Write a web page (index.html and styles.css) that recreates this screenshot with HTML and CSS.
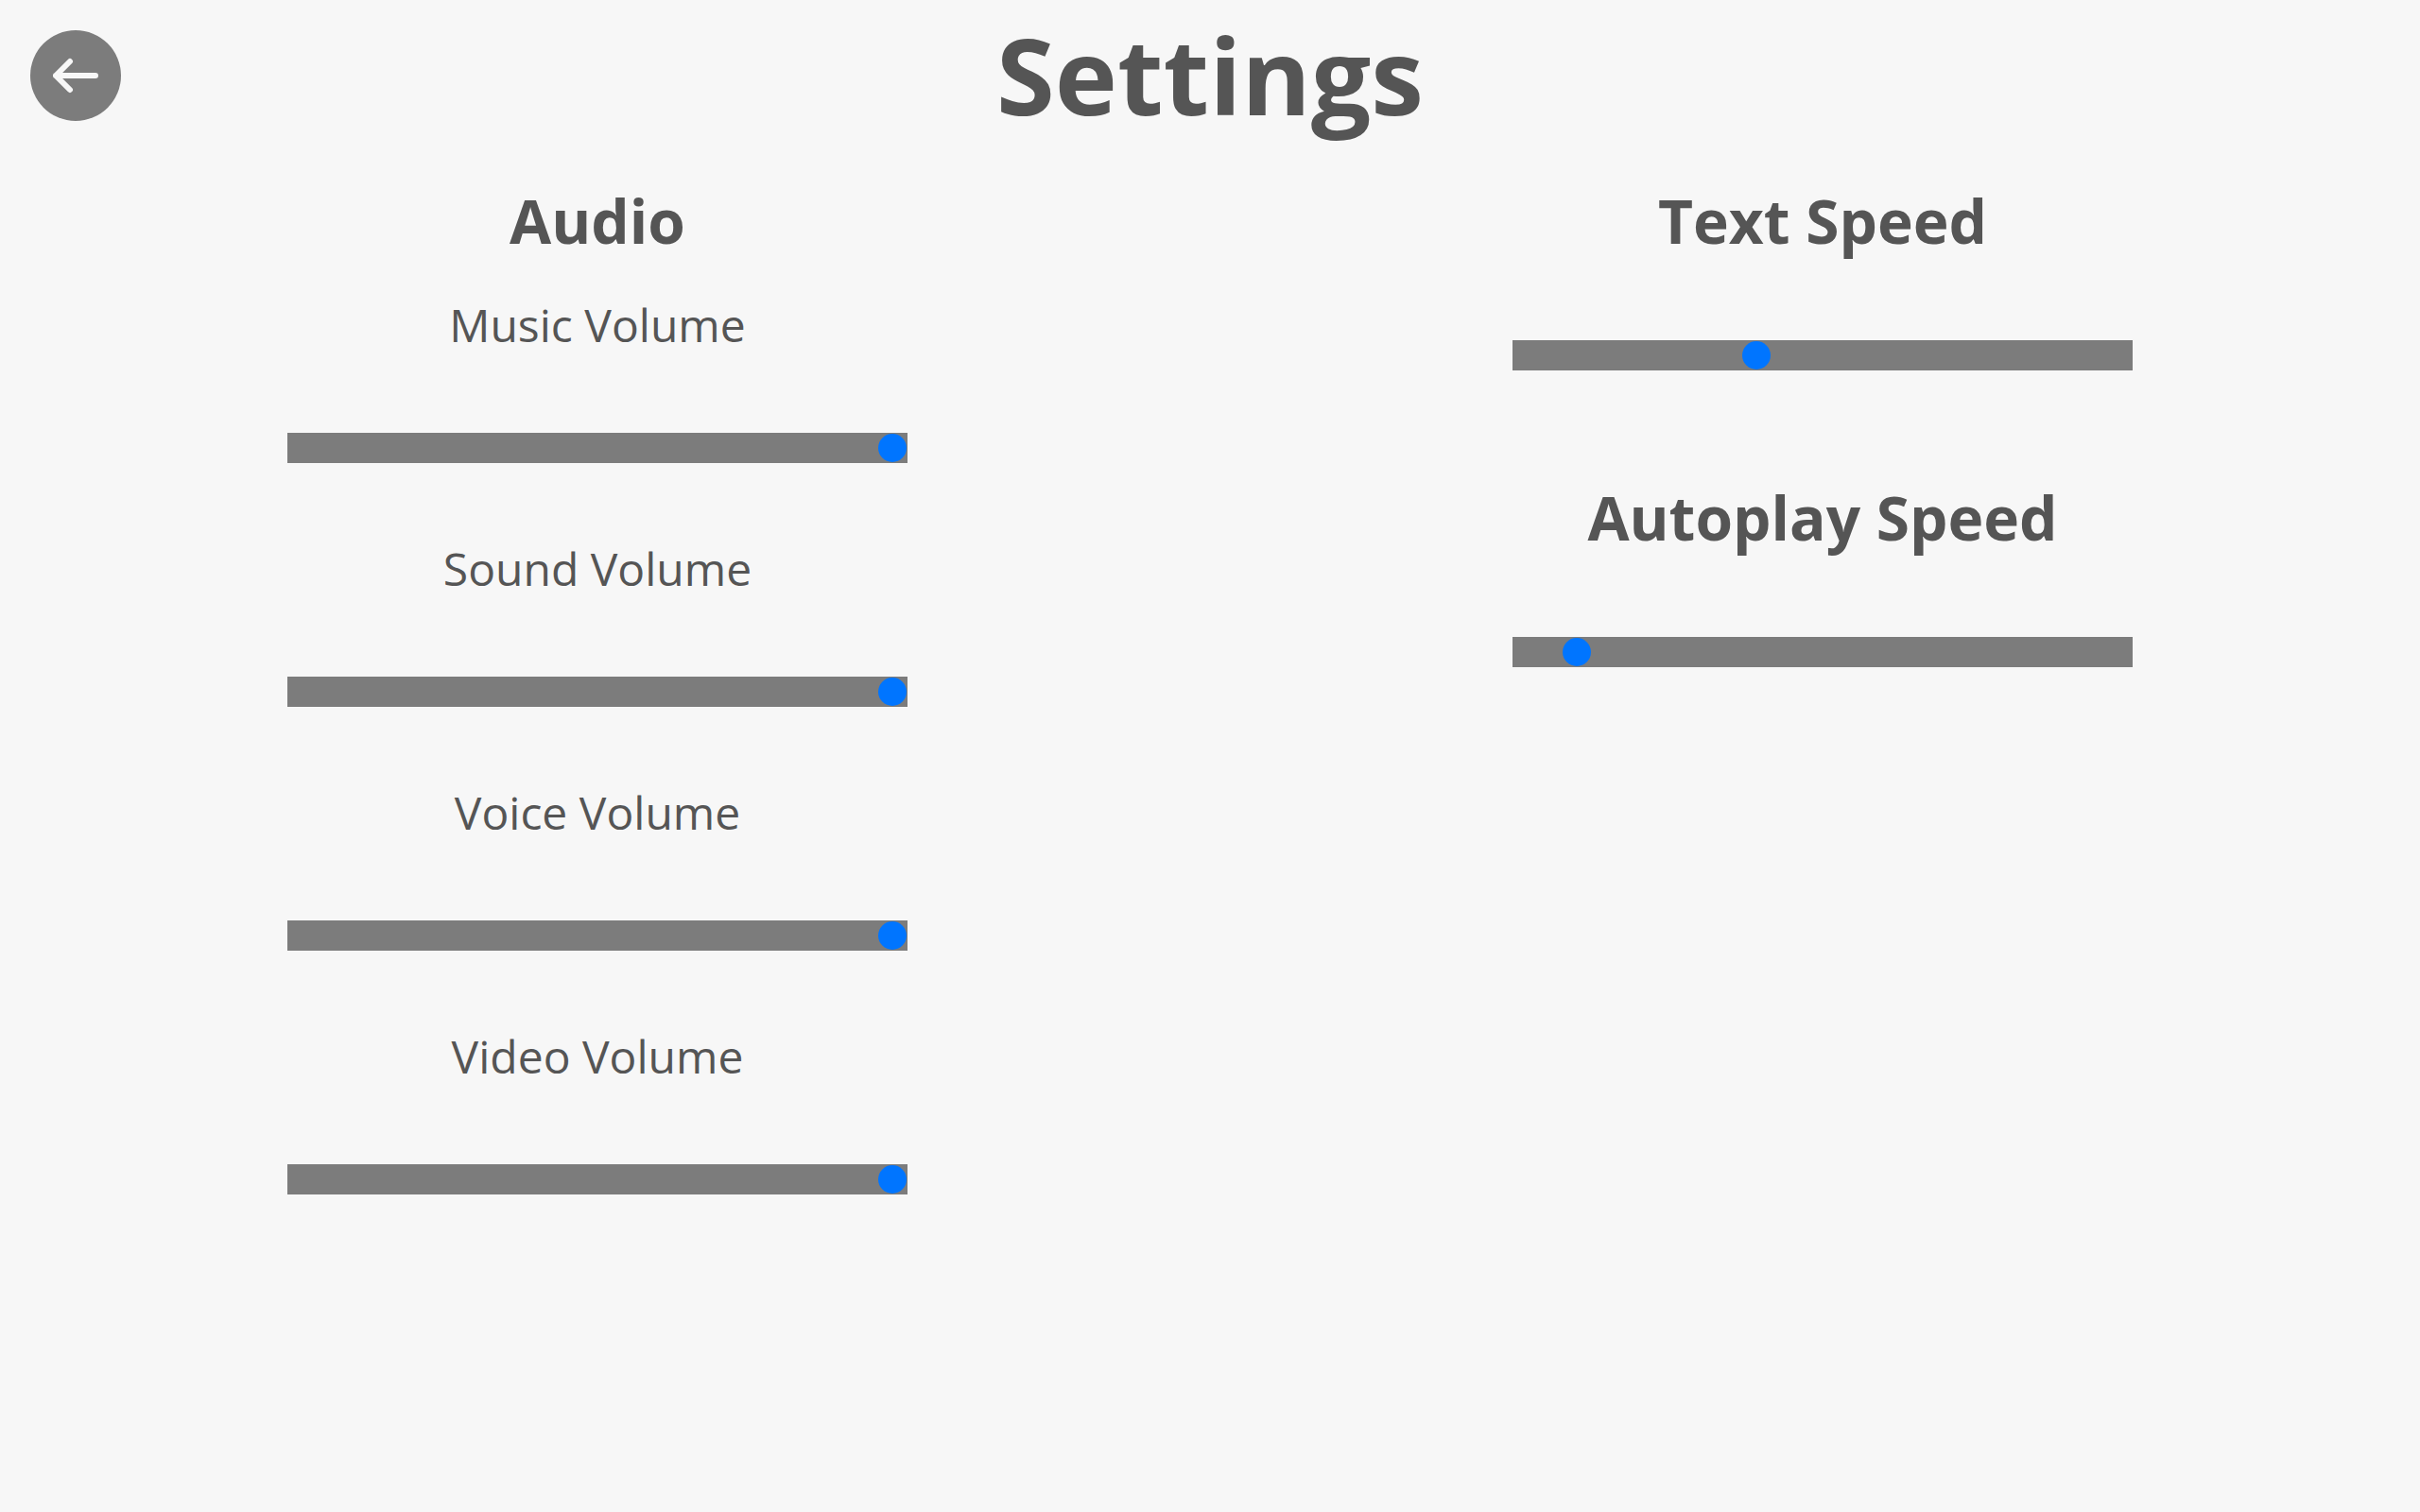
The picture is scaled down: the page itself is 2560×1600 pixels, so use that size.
FILE: index.html
```html
<!DOCTYPE html>
<html lang="en">
  <head>
    <meta charset="UTF-8" />
    <meta name="viewport" content="width=device-width, initial-scale=1.0" />
    <title>Settings</title>
    <link rel="stylesheet" href="styles.css">
  </head>
  <body>
    <header class="header">
      <button class="back-button" type="button" aria-label="Back">
        <svg class="back-icon" viewBox="0 0 48 48">
          <path d="M18 9 L3 24 L18 39 M3 24 H45" />
        </svg>
      </button>
      <h1 class="title">Settings</h1>
    </header>

    <main class="settings">
      <section class="column">
        <h2 class="heading">Audio</h2>
        <div class="setting">
          <label class="label" for="music">Music Volume</label>
          <input class="slider" type="range" id="music" min="0" max="1" step="0.01" value="1" />
        </div>
        <div class="setting">
          <label class="label" for="sound">Sound Volume</label>
          <input class="slider" type="range" id="sound" min="0" max="1" step="0.01" value="1" />
        </div>
        <div class="setting">
          <label class="label" for="voice">Voice Volume</label>
          <input class="slider" type="range" id="voice" min="0" max="1" step="0.01" value="1" />
        </div>
        <div class="setting">
          <label class="label" for="video">Video Volume</label>
          <input class="slider" type="range" id="video" min="0" max="1" step="0.01" value="1" />
        </div>
      </section>

      <section class="column">
        <div class="speed">
          <h2 class="heading"><label for="textSpeed">Text Speed</label></h2>
          <input class="slider" type="range" id="textSpeed" min="1" max="50" step="1" value="20" />
        </div>
        <div class="speed">
          <h2 class="heading"><label for="autoplaySpeed">Autoplay Speed</label></h2>
          <input class="slider" type="range" id="autoplaySpeed" min="0" max="60" step="1" value="5" />
        </div>
      </section>
    </main>
  </body>
</html>
```

FILE: styles.css
```css
* {
  margin: 0;
  padding: 0;
  box-sizing: border-box;
}

body {
  font-family: "Open Sans", "Noto Sans", sans-serif;
  color: #555;
  background-color: #f7f7f7;
}

.header {
  display: grid;
  grid-template-columns: 96px 1fr 96px;
  align-items: center;
  padding: 0 32px;
  height: 160px;
}

.back-button {
  display: flex;
  align-items: center;
  justify-content: center;
  width: 96px;
  height: 96px;
  border: none;
  border-radius: 50%;
  background-color: #7c7c7c;
  cursor: pointer;
}

.back-icon {
  width: 48px;
  height: 48px;
  fill: none;
  stroke: #f7f7f7;
  stroke-width: 6;
  stroke-linecap: round;
  stroke-linejoin: round;
}

.title {
  padding-bottom: 2px;
  font-size: 112px;
  line-height: 156px;
  text-align: center;
}

.settings {
  display: grid;
  grid-template-columns: 1fr 1fr;
  gap: 32px;
  padding-top: 32px;
}

.column,
.setting,
.speed {
  display: flex;
  flex-direction: column;
  align-items: center;
}

.heading {
  font-size: 64px;
  line-height: 84px;
}

.label {
  font-size: 48px;
  line-height: 64px;
}

.setting {
  gap: 82px;
  width: 100%;
  padding: 36px 0 44px;
}

.speed {
  gap: 84px;
  width: 100%;
  padding-bottom: 114px;
}

.slider {
  appearance: none;
  width: 656px;
  max-width: 100%;
  height: 32px;
  background-color: #7c7c7c;
  cursor: pointer;
}

.slider::-webkit-slider-thumb {
  appearance: none;
  width: 32px;
  height: 32px;
  border: 1px solid transparent;
  border-radius: 50%;
  background-color: #0075ff;
  background-clip: padding-box;
}
```
